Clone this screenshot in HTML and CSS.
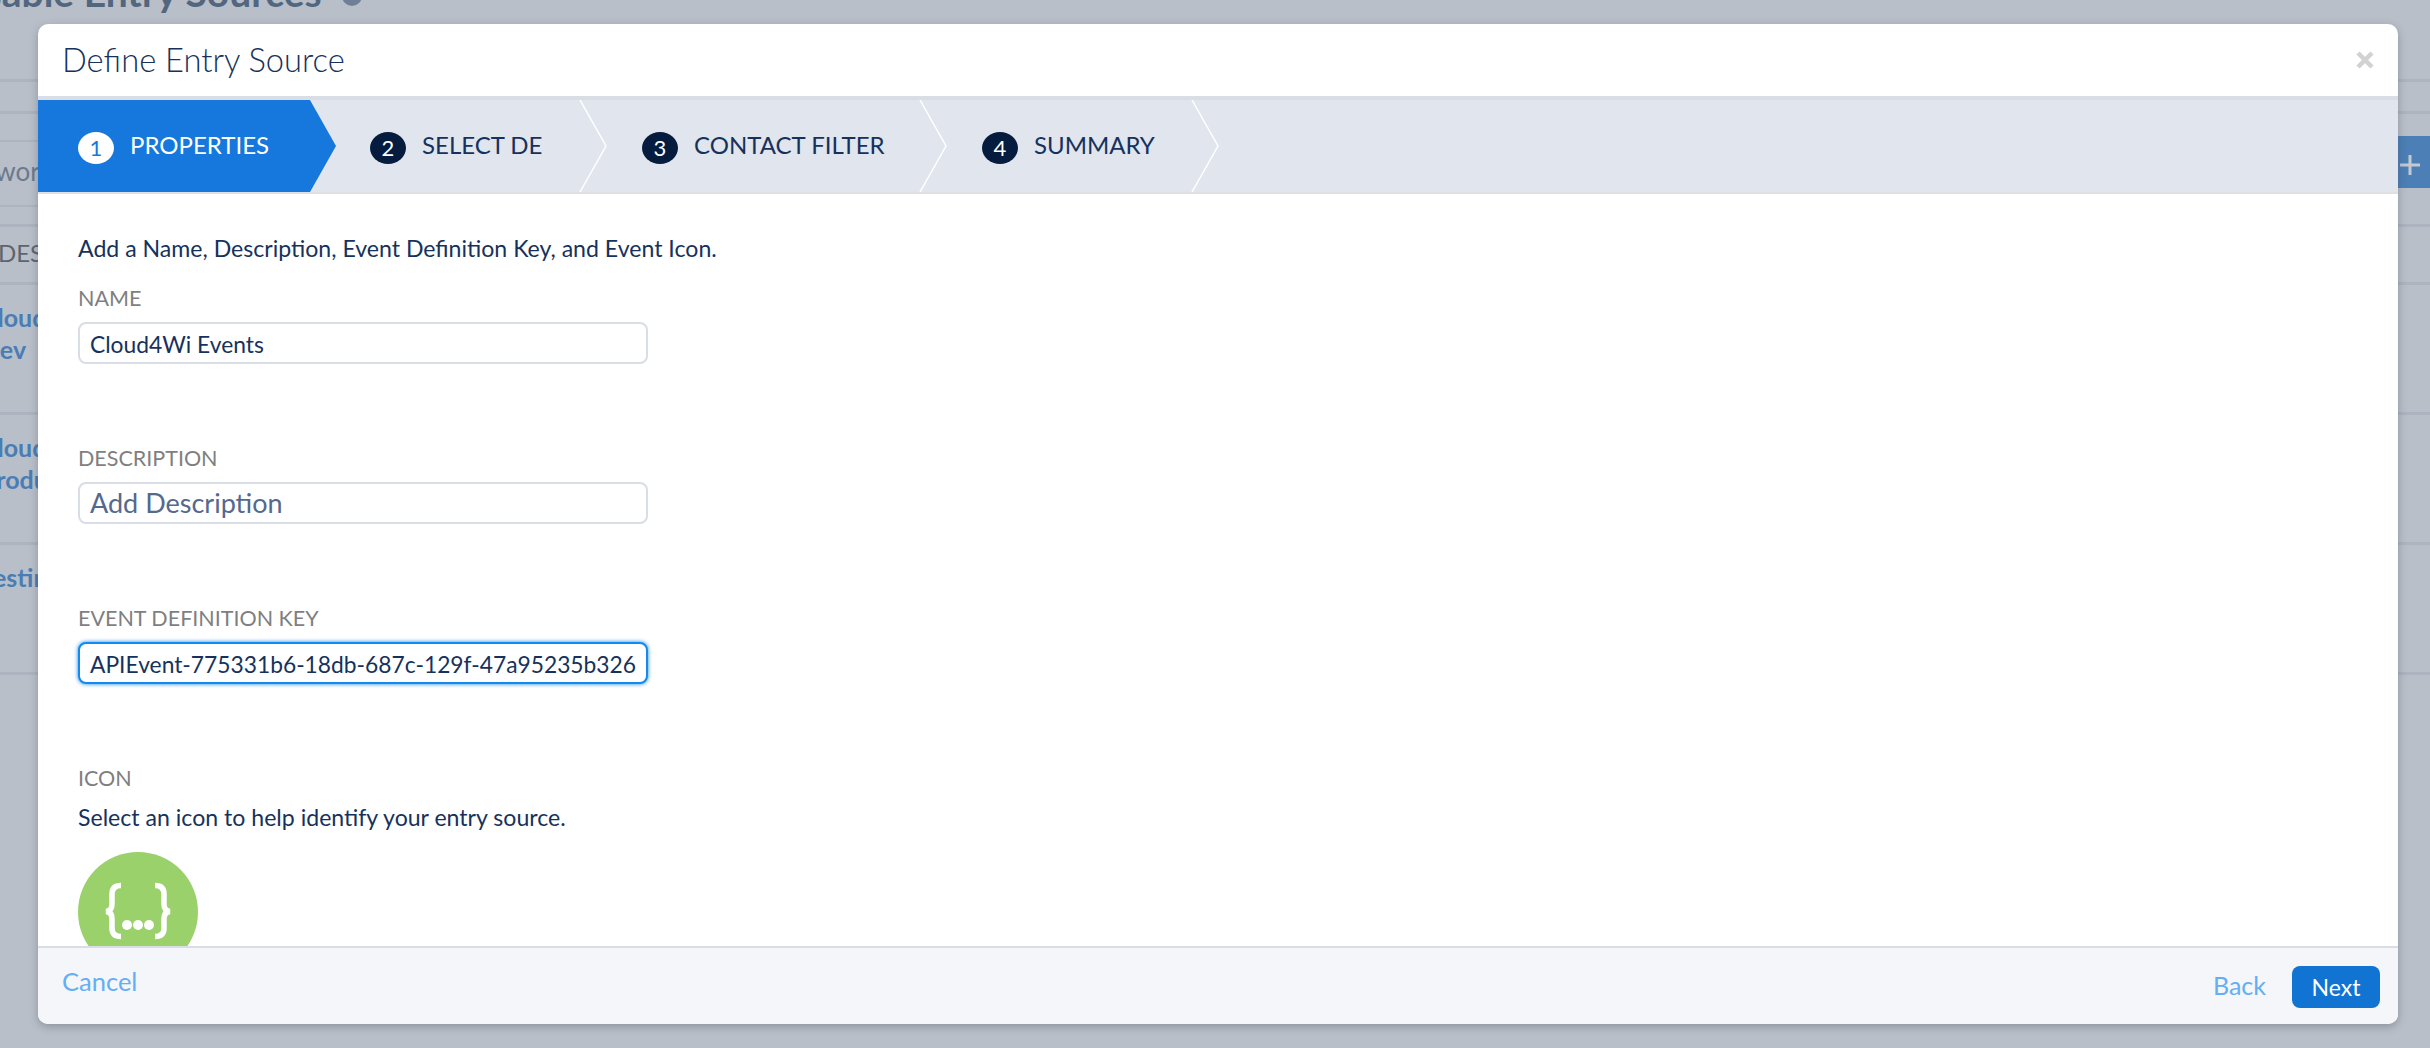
FILE: index.html
```html
<!DOCTYPE html>
<html lang="en">
<head>
<meta charset="utf-8">
<title>Define Entry Source</title>
<link rel="stylesheet" href="styles.css">
</head>
<body>
<div class="page">
  <header class="page-head">
    <h1 class="page-title">Reusable Entry Sources</h1>
    <span class="title-dot"></span>
  </header>
  <div class="tabs-row"></div>
  <div class="toolbar">
    <div class="search">keywords</div>
    <div class="add-btn"><svg width="32" height="32" viewBox="0 0 32 32"><path d="M2 19H22M12 9V29" stroke="#c3c9d1" stroke-width="3" fill="none"/></svg></div>
  </div>
  <div class="thead">DESCRIPTION</div>
  <div class="trow"><div class="trow-text">Cloud4Wi<br>Dev</div></div>
  <div class="trow"><div class="trow-text">Cloud4Wi<br>Production</div></div>
  <div class="trow"><div class="trow-text">Testing</div></div>
</div>

<section class="modal">
  <header class="modal-head">
    <h2 class="modal-title">Define Entry Source</h2>
    <svg class="close" width="18" height="18" viewBox="0 0 18 18"><path d="M2 2L16 16M16 2L2 16" stroke="#d2d2d2" stroke-width="4.5" fill="none"/></svg>
  </header>
  <nav class="steps">
    <div class="step step-active step-1"><span class="num">1</span><span class="label">PROPERTIES</span>
      <svg class="arrow" width="28" height="92" viewBox="0 0 28 92"><path d="M0 0H1L27 46L1 92H0Z" fill="#1678dd"/></svg></div>
    <div class="step step-2"><span class="num">2</span><span class="label">SELECT DE</span>
      <svg class="arrow" width="28" height="92" viewBox="0 0 28 92"><path d="M1 0L27 46L1 92" fill="none" stroke="#fff" stroke-width="1.5"/></svg></div>
    <div class="step step-3"><span class="num">3</span><span class="label">CONTACT FILTER</span>
      <svg class="arrow" width="28" height="92" viewBox="0 0 28 92"><path d="M1 0L27 46L1 92" fill="none" stroke="#fff" stroke-width="1.5"/></svg></div>
    <div class="step step-4"><span class="num">4</span><span class="label">SUMMARY</span>
      <svg class="arrow" width="28" height="92" viewBox="0 0 28 92"><path d="M1 0L27 46L1 92" fill="none" stroke="#fff" stroke-width="1.5"/></svg></div>
  </nav>
  <main class="modal-body">
    <p class="intro">Add a Name, Description, Event Definition Key, and Event Icon.</p>
    <div class="field">
      <div class="field-label">NAME</div>
      <div class="input">Cloud4Wi Events</div>
    </div>
    <div class="field">
      <div class="field-label">DESCRIPTION</div>
      <div class="input input-placeholder">Add Description</div>
    </div>
    <div class="field">
      <div class="field-label">EVENT DEFINITION KEY</div>
      <div class="input input-focus">APIEvent-775331b6-18db-687c-129f-47a95235b326</div>
    </div>
    <div class="field-label">ICON</div>
    <p class="hint">Select an icon to help identify your entry source.</p>
    <svg class="event-icon" width="120" height="120" viewBox="0 0 120 120">
      <circle cx="60" cy="60" r="60" fill="#9ad16b"/>
      <path d="M43 33.500Q34 33.500 34 42V52Q34 59 28 59.500Q34 60 34 67V76Q34 84.500 43 84.500" fill="none" stroke="#fff" stroke-width="5.500"/>
      <path d="M77 33.500Q86 33.500 86 42V52Q86 59 92 59.500Q86 60 86 67V76Q86 84.500 77 84.500" fill="none" stroke="#fff" stroke-width="5.500"/>
      <circle cx="49" cy="73" r="5" fill="#fff"/><circle cx="60" cy="73" r="5" fill="#fff"/><circle cx="71" cy="73" r="5" fill="#fff"/>
    </svg>
  </main>
  <footer class="modal-foot">
    <a class="link link-cancel">Cancel</a>
    <div class="foot-right">
      <a class="link link-back">Back</a>
      <button class="next">Next</button>
    </div>
  </footer>
</section>
</body>
</html>
```
FILE: styles.css
```css
* { box-sizing: border-box; }
html, body { margin: 0; height: 100%; overflow: hidden; }
body { background: #b8bfc8; font-family: "Lato", "Open Sans", sans-serif; color: #16325c; }

.page { height: 1048px; overflow: hidden; }
.page-head { height: 82px; border-bottom: 3px solid #adb4bf; display: flex; align-items: flex-start; }
.page-title { margin: -33px 0 0 -82px; font-size: 39px; line-height: 50px; font-weight: 700; color: #52677f; white-space: nowrap; }
.title-dot { width: 20px; height: 20px; border-radius: 50%; background: #6f7f98; margin: -14px 0 0 20px; }
.tabs-row { height: 32px; border-bottom: 3px solid #adb4bf; }
.toolbar { height: 113px; border-bottom: 3px solid #adb4bf; display: flex; justify-content: space-between; align-items: flex-start; padding-top: 22px; }
.search { width: 1200px; height: 67px; border-top: 2px solid #adb4bf; border-bottom: 2px solid #adb4bf; font-size: 26px; line-height: 58px; color: #6b7a8d; margin: 4px 0 0 -44px; }
.add-btn { width: 60px; height: 52px; background: #4b7fb5; border-radius: 8px 0 0 8px; display: flex; justify-content: flex-end; align-items: center; }
.thead { height: 58px; border-bottom: 3px solid #adb4bf; font-size: 24px; line-height: 52px; color: #5c656f; text-indent: -2px; }
.trow { height: 130px; border-bottom: 3px solid #adb4bf; padding-top: 16px; }
.trow-text { font-size: 25px; line-height: 32px; font-weight: 700; color: #4a7db5; margin-left: -19px; }

.modal { position: absolute; left: 38px; top: 24px; width: 2360px; height: 1000px; background: #fff; border-radius: 10px; box-shadow: 0 3px 8px rgba(60, 70, 85, .35); display: flex; flex-direction: column; overflow: hidden; }
.modal-head { height: 76px; flex: none; border-bottom: 4px solid #d8dde6; display: flex; align-items: center; justify-content: space-between; padding: 0 24px; }
.modal-title { margin: 0; font-size: 32.700px; font-weight: 300; line-height: 40px; color: #16325c; }
.close { display: block; }

.steps { height: 94px; flex: none; display: flex; background: #e0e5ee; border-bottom: 2px solid #dfe0e3; }
.step { position: relative; height: 92px; display: flex; align-items: flex-start; padding: 32px 0 0 40px; flex: none; }
.step-1 { width: 272px; background: #1678dd; color: #fff; }
.step-2 { width: 270px; padding-left: 60px; }
.step-3 { width: 340px; padding-left: 62px; }
.step-4 { width: 272px; padding-left: 62px; }
.num { width: 36px; height: 32px; border-radius: 50%; background: #061c3f; color: #fff; font-size: 22px; line-height: 32px; text-align: center; flex: none; }
.step-active .num { background: #fff; color: #1678dd; }
.label { font-size: 24px; line-height: 26px; margin-left: 16px; white-space: nowrap; color: #16325c; }
.step-active .label { color: #fff; }
.arrow { position: absolute; left: 100%; top: 0; display: block; margin-left: -1px; z-index: 1; }

.modal-body { flex: 1; min-height: 0; overflow: hidden; padding: 37px 40px 0; }
.intro { margin: 0 0 17px; font-size: 23.100px; line-height: 34px; }
.field { height: 160px; }
.field-label { font-size: 21.500px; line-height: 32px; height: 40px; color: #7f7f7f; }
.input { width: 570px; height: 42px; border: 2px solid #d8dde6; border-radius: 8px; padding: 0 10px; font-size: 22.800px; line-height: 40px; white-space: nowrap; overflow: hidden; background: #fff; }
.input-placeholder { font-size: 27px; line-height: 37px; color: #54698d; }
.input-focus { border-color: #1589ee; box-shadow: 0 0 4px #1589ee; }
.hint { margin: -2px 0 0; font-size: 23.100px; line-height: 34px; }
.event-icon { display: block; margin-top: 18px; }

.modal-foot { height: 78px; flex: none; background: #f4f6f9; border-top: 2px solid #d8dde6; display: flex; justify-content: space-between; padding: 0 18px 0 24px; }
.foot-right { display: flex; align-items: flex-start; }
.link { color: #64aef5; font-size: 25.500px; line-height: 30px; }
.link-cancel { margin-top: 18px; }
.link-back { margin: 22px 26px 0 0; font-size: 25px; }
.next { width: 88px; height: 42px; margin-top: 18px; border: 0; border-radius: 8px; background: #1274d2; color: #fff; font: 400 23px/38px "Lato", sans-serif; padding: 0; }
```
